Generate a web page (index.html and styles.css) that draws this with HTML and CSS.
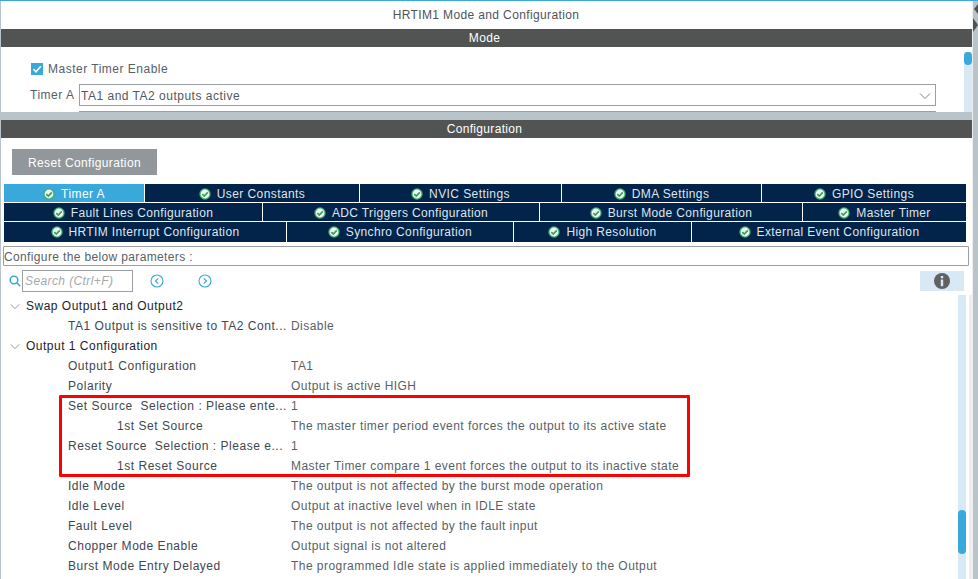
FILE: index.html
```html
<!DOCTYPE html>
<html lang="en">
<head>
<meta charset="utf-8">
<title>HRTIM1 Mode and Configuration</title>
<link rel="stylesheet" href="styles.css">
</head>
<body>
<svg class="defs" width="0" height="0" aria-hidden="true">
  <symbol id="ok" viewBox="0 0 12 12">
    <circle cx="6" cy="6" r="5.7" fill="#3fae6c"/>
    <circle cx="6" cy="6" r="4.4" fill="#eef8f2"/>
    <path d="M3.3 6.1 5.3 8 8.8 4.4" fill="none" stroke="#3a9c63" stroke-width="1.7"/>
  </symbol>
  <symbol id="chev" viewBox="0 0 12 8">
    <path d="M1 1.5 6 6.5 11 1.5" fill="none" stroke="#7d8488" stroke-width="1"/>
  </symbol>
</svg>
<div class="app">
  <main class="main">
    <header class="title">HRTIM1 Mode and Configuration</header>
    <div class="bar">Mode</div>
    <section class="mode">
      <div class="mode-form">
        <label class="check-row"><span class="check"><svg viewBox="0 0 12 12" width="12" height="12"><path d="M2.5 6.2 5 8.8 9.8 3.2" fill="none" stroke="#fff" stroke-width="1.6"/></svg></span>Master Timer Enable</label>
        <div class="select-row">
          <span class="select-label">Timer A</span>
          <div class="select"><span>TA1 and TA2 outputs active</span><svg width="12" height="8"><use href="#chev"/></svg></div>
        </div>
        <div class="select-next"></div>
      </div>
      <div class="mode-scroll"><div class="mode-thumb"></div></div>
    </section>
    <div class="sep"></div>
    <div class="bar">Configuration</div>
    <section class="config">
      <button class="reset" type="button">Reset Configuration</button>
      <div class="tabs">
        <div class="tab-row r1">
          <div class="tab active t-a"><svg width="12" height="12"><use href="#ok"/></svg>Timer A</div>
          <div class="tab t-uc"><svg width="12" height="12"><use href="#ok"/></svg>User Constants</div>
          <div class="tab t-nv"><svg width="12" height="12"><use href="#ok"/></svg>NVIC Settings</div>
          <div class="tab t-dm"><svg width="12" height="12"><use href="#ok"/></svg>DMA Settings</div>
          <div class="tab t-gp"><svg width="12" height="12"><use href="#ok"/></svg>GPIO Settings</div>
        </div>
        <div class="tab-row r2">
          <div class="tab t-fl"><svg width="12" height="12"><use href="#ok"/></svg>Fault Lines Configuration</div>
          <div class="tab t-ad"><svg width="12" height="12"><use href="#ok"/></svg>ADC Triggers Configuration</div>
          <div class="tab t-bm"><svg width="12" height="12"><use href="#ok"/></svg>Burst Mode Configuration</div>
          <div class="tab t-mt"><svg width="12" height="12"><use href="#ok"/></svg>Master Timer</div>
        </div>
        <div class="tab-row r3">
          <div class="tab t-hr"><svg width="12" height="12"><use href="#ok"/></svg>HRTIM Interrupt Configuration</div>
          <div class="tab t-sy"><svg width="12" height="12"><use href="#ok"/></svg>Synchro Configuration</div>
          <div class="tab t-hi"><svg width="12" height="12"><use href="#ok"/></svg>High Resolution</div>
          <div class="tab t-ee"><svg width="12" height="12"><use href="#ok"/></svg>External Event Configuration</div>
        </div>
      </div>
      <div class="hint">Configure the below parameters :</div>
      <div class="searchbar">
        <svg class="lens" width="12" height="12" viewBox="0 0 12 12"><circle cx="5" cy="5" r="3.8" fill="none" stroke="#39a9dc" stroke-width="1.5"/><path d="M7.8 7.8 11.2 11.2" stroke="#39a9dc" stroke-width="1.6"/></svg>
        <div class="search">Search (Ctrl+F)</div>
        <svg class="nav first" width="14" height="14" viewBox="0 0 14 14"><circle cx="7" cy="7" r="6" fill="none" stroke="#39a9dc" stroke-width="1.1"/><path d="M8.2 4.3 5.5 7 8.2 9.7" fill="none" stroke="#39a9dc" stroke-width="1.2"/></svg>
        <svg class="nav" width="14" height="14" viewBox="0 0 14 14"><circle cx="7" cy="7" r="6" fill="none" stroke="#39a9dc" stroke-width="1.1"/><path d="M5.8 4.3 8.5 7 5.8 9.7" fill="none" stroke="#39a9dc" stroke-width="1.2"/></svg>
        <div class="info"><svg width="16" height="16" viewBox="0 0 16 16"><circle cx="8" cy="8" r="8" fill="#5f6163"/><rect x="6.8" y="6.6" width="2.4" height="6.6" fill="#dce9f5"/><rect x="6.8" y="3" width="2.4" height="2.3" fill="#dce9f5"/></svg></div>
      </div>
      <div class="params">
        <div class="tree">
          <div class="group"><svg width="10" height="7" viewBox="0 0 12 8"><use href="#chev"/></svg>Swap Output1 and Output2</div>
          <div class="row"><span class="k">TA1 Output is sensitive to TA2 Cont...</span><span>Disable</span></div>
          <div class="group"><svg width="10" height="7" viewBox="0 0 12 8"><use href="#chev"/></svg>Output 1 Configuration</div>
          <div class="row"><span class="k">Output1 Configuration</span><span>TA1</span></div>
          <div class="row"><span class="k">Polarity</span><span>Output is active HIGH</span></div>
          <div class="row"><span class="k">Set Source&nbsp; Selection : Please ente...</span><span>1</span></div>
          <div class="row"><span class="k sub">1st Set Source</span><span>The master timer period event forces the output to its active state</span></div>
          <div class="row"><span class="k">Reset Source&nbsp; Selection : Please e...</span><span>1</span></div>
          <div class="row"><span class="k sub">1st Reset Source</span><span>Master Timer compare 1 event forces the output to its inactive state</span></div>
          <div class="row"><span class="k">Idle Mode</span><span>The output is not affected by the burst mode operation</span></div>
          <div class="row"><span class="k">Idle Level</span><span>Output at inactive level when in IDLE state</span></div>
          <div class="row"><span class="k">Fault Level</span><span>The output is not affected by the fault input</span></div>
          <div class="row"><span class="k">Chopper Mode Enable</span><span>Output signal is not altered</span></div>
          <div class="row"><span class="k">Burst Mode Entry Delayed</span><span>The programmed Idle state is applied immediately to the Output</span></div>
          <div class="highlight"></div>
        </div>
        <div class="vscroll"><div class="vthumb"></div></div>
        <div class="strip"></div>
      </div>
    </section>
  </main>
  <aside class="gutter">
    <svg width="5" height="32" viewBox="0 0 5 32"><path d="M5 3 1 8 5 13ZM0 17 5 24 0 31Z" fill="#4f5254"/></svg>
  </aside>
</div>
</body>
</html>
```
FILE: styles.css
```css
* { box-sizing: border-box; }
html, body { margin: 0; padding: 0; height: 100%; overflow: hidden; background: #fff; }
body { font-family: "Liberation Sans", Arial, sans-serif; font-size: 12px; color: #5a5f66; letter-spacing: .5px; }
.defs { position: absolute; }
.app { display: flex; width: 978px; height: 579px; border-top: 1px solid #39a9dc; overflow: hidden; }
.main { width: 972px; flex: none; border-left: 1px solid #b9c4ca; display: flex; flex-direction: column; }
.gutter { width: 6px; flex: none; background: #b9c4ca; border-left: 1px solid #eeeeee; }
.gutter svg { display: block; }
.title { height: 28px; line-height: 29px; text-align: center; color: #4f5459; letter-spacing: .37px; padding-right: 1px; }
.bar { height: 18px; line-height: 19px; background: #525453; color: #fff; text-align: center; letter-spacing: .33px; padding-right: 4px; }
.mode { height: 65px; display: flex; overflow: hidden; }
.mode-form { flex: 1; padding: 14px 0 0 29px; }
.check-row { display: flex; align-items: center; height: 16px; gap: 5px; color: #55606a; padding-left: 1px; }
.check { width: 12px; height: 12px; background: #39a9dc; display: block; }
.check svg { display: block; }
.select-row { display: flex; align-items: center; margin-top: 7px; gap: 4px; }
.select-label { width: 45px; color: #55606a; }
.select { width: 857px; height: 22px; border: 1px solid #999fa3; display: flex; align-items: center; justify-content: space-between; padding: 1px 4px 0 1px; color: #4f5960; }
.select-next { margin-left: 49px; width: 857px; height: 1px; margin-top: 5px; background: #999fa3; }
.mode-scroll { width: 8px; margin-top: 5px; background: #d9e8f5; }
.mode-thumb { width: 8px; height: 13px; background: #39a9dc; border-radius: 4px; }
.sep { height: 8px; background: #b9c4ca; }
.config { flex: 1; min-height: 0; padding-top: 11px; }
.reset { display: block; margin: 0 0 9px 11px; width: 145px; height: 26px; border: 0; background: #92979b; color: #fff; font: inherit; letter-spacing: .36px; padding: 1px 0 0; }
.tabs { margin-left: 3px; width: 962px; display: flex; flex-direction: column; gap: 1px; background: #fff; letter-spacing: .36px; }
.tab-row { display: flex; gap: 1px; }
.r1 { letter-spacing: .42px; }
.r1 .tab { height: 18px; } .r2 .tab { height: 18px; } .r3 .tab { height: 20px; }
.tab { background: #02234a; color: #dfe6ee; display: flex; align-items: center; justify-content: center; gap: 6px; white-space: nowrap; padding-top: 1px; }
.r3 .tab { padding-top: 0; }
.tab svg { flex: none; }
.tab.active { background: #39a9dc; color: #fff; }
.t-a { width: 140px; } .t-uc { width: 214px; } .t-nv { width: 201px; } .t-dm { width: 199px; } .t-gp { flex: 1; }
.t-fl { width: 258px; } .t-ad { width: 276px; } .t-bm { width: 262px; } .t-mt { flex: 1; }
.t-hr { width: 282px; } .t-sy { width: 226px; } .t-hi { width: 177px; } .t-ee { flex: 1; }
.hint { margin: 4px 0 0 2px; width: 966px; height: 20px; line-height: 20px; border: 1px solid #999fa3; border-radius: 1px; padding-left: 0; color: #5a5f66; letter-spacing: .36px; }
.searchbar { display: flex; align-items: center; height: 22px; margin-top: 4px; padding-left: 8px; }
.lens { flex: none; }
.search { width: 111px; height: 22px; line-height: 21px; border: 1px solid #999fa3; margin-left: 1px; padding-left: 2px; color: #a5a9ad; font-style: italic; letter-spacing: .4px; }
.nav { flex: none; margin-left: 34px; }
.nav.first { margin-left: 17px; }
.info { margin-left: auto; margin-right: 8px; width: 44px; height: 20px; background: #d9e8f5; display: flex; align-items: center; justify-content: center; }
.params { display: flex; height: 287px; padding-top: 3px; }
.tree { flex: 1; position: relative; padding-top: 1px; }
.group, .row { height: 20px; line-height: 20px; display: flex; white-space: nowrap; }
.group { align-items: center; padding-left: 9px; gap: 6px; color: #1e2328; }
.group svg { flex: none; }
.row { padding-left: 67px; color: #5a5f66; letter-spacing: .45px; }
.k { width: 223px; color: #404750; letter-spacing: .53px; }
.sub { padding-left: 49px; }
.highlight { position: absolute; left: 58px; top: 100px; width: 631px; height: 82px; border: 3px solid #f00; border-radius: 1px; }
.vscroll { width: 8px; margin-right: 3px; background: #d9e8f5; }
.vthumb { width: 8px; height: 44px; margin-top: 215px; background: #39a9dc; border-radius: 4px; }
.strip { width: 3px; background: #eeeeee; }
```
